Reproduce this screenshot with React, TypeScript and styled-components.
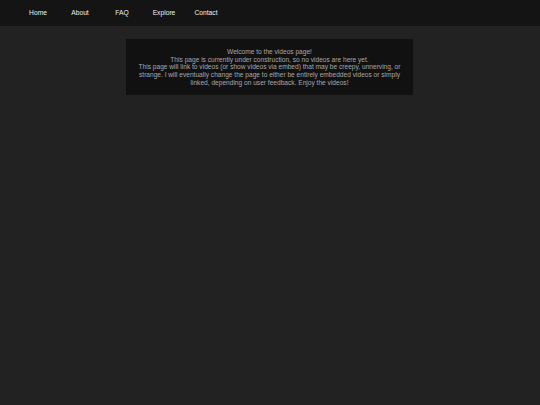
import React from 'react'
import styled, { createGlobalStyle } from 'styled-components'

const GlobalStyle = createGlobalStyle`
  html, body {
    margin: 0;
    padding: 0;
    background: #222222;
    font-family: 'Liberation Sans', Arial, sans-serif;
  }
`

const Page = styled.div`
  min-height: 405px;
  background: #222222;
`

const NavBar = styled.nav`
  height: 26px;
  background: #141414;
  display: flex;
  flex-direction: row;
  align-items: center;
  padding-left: 17px;
  padding-bottom: 2px;
  box-sizing: border-box;
`

const NavItem = styled.a`
  width: 42px;
  text-align: center;
  color: #f0f0f0;
  font-size: 6.7px;
  text-decoration: none;
`

const Content = styled.main`
  display: flex;
  justify-content: center;
  padding-top: 13px;
  padding-right: 1px;
`

const Notice = styled.div`
  width: 287px;
  box-sizing: border-box;
  background: #111111;
  padding: 9px 8px 8px;
`

const NoticeText = styled.p`
  margin: 0;
  color: #a8a8a8;
  font-size: 6.6px;
  line-height: 7.7px;
  text-align: center;
`

const menus = ['Home', 'About', 'FAQ', 'Explore', 'Contact']

const App: React.FC = () => {
  return (
    <Page>
      <GlobalStyle />
      <NavBar>
        {menus.map((menu) => (
          <NavItem key={menu} href="#">
            {menu}
          </NavItem>
        ))}
      </NavBar>
      <Content>
        <Notice>
          <NoticeText>
            Welcome to the videos page!
            <br />
            This page is currently under construction, so no videos are here yet.
            <br />
            This page will link to videos (or show videos via embed) that may be creepy, unnerving,
            or strange. I will eventually change the page to either be entirely embedded videos or
            simply linked, depending on user feedback. Enjoy the videos!
          </NoticeText>
        </Notice>
      </Content>
    </Page>
  )
}

export default App
